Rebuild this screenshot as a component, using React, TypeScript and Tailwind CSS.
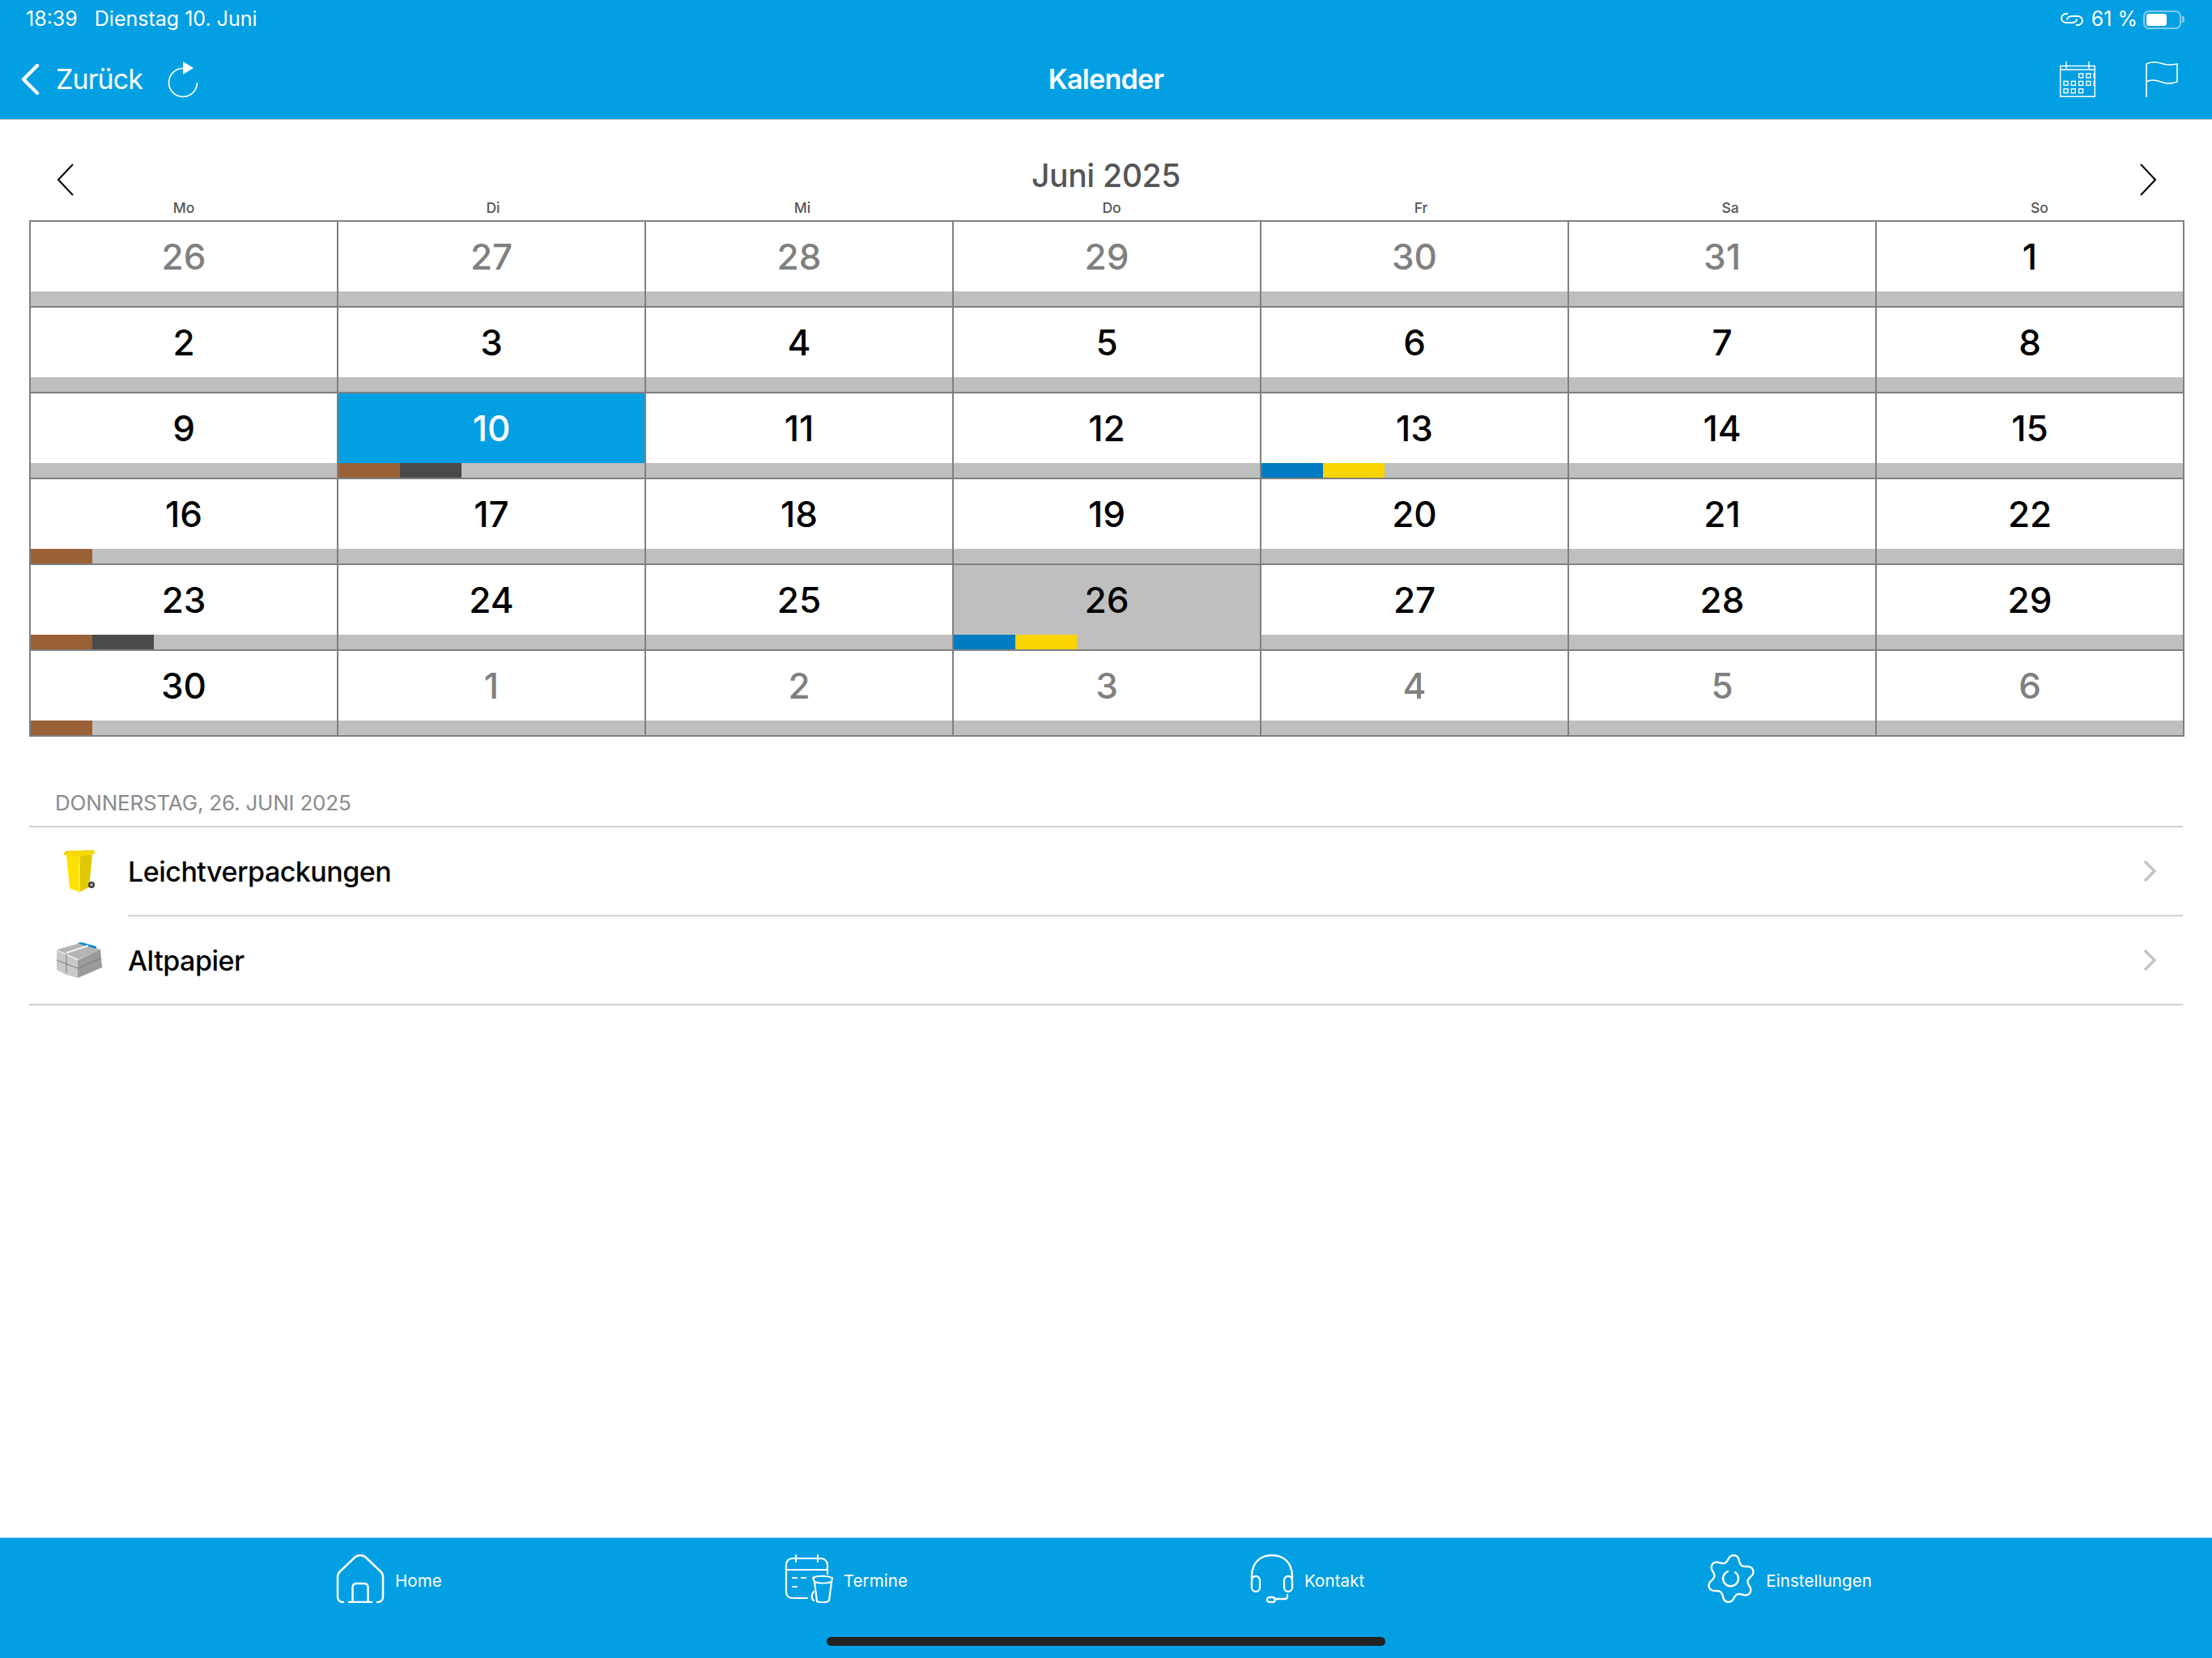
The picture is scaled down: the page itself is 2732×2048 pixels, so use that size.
import type { ReactNode } from "react";

const SANS = "font-['Inter','Noto_Sans',sans-serif]";

type Cell = { day: number; muted?: boolean; today?: boolean; selected?: boolean; marks?: string[] };

const BROWN = "bg-[#9b6136]";
const DARK = "bg-[#4a4a4a]";
const BLUE = "bg-[#007cc3]";
const YELLOW = "bg-[#fbd500]";

const weekdays = ["Mo", "Di", "Mi", "Do", "Fr", "Sa", "So"];

const cells: Cell[] = [
  { day: 26, muted: true },
  { day: 27, muted: true },
  { day: 28, muted: true },
  { day: 29, muted: true },
  { day: 30, muted: true },
  { day: 31, muted: true },
  { day: 1 },
  { day: 2 },
  { day: 3 },
  { day: 4 },
  { day: 5 },
  { day: 6 },
  { day: 7 },
  { day: 8 },
  { day: 9 },
  { day: 10, today: true, marks: [BROWN, DARK] },
  { day: 11 },
  { day: 12 },
  { day: 13, marks: [BLUE, YELLOW] },
  { day: 14 },
  { day: 15 },
  { day: 16, marks: [BROWN] },
  { day: 17 },
  { day: 18 },
  { day: 19 },
  { day: 20 },
  { day: 21 },
  { day: 22 },
  { day: 23, marks: [BROWN, DARK] },
  { day: 24 },
  { day: 25 },
  { day: 26, selected: true, marks: [BLUE, YELLOW] },
  { day: 27 },
  { day: 28 },
  { day: 29 },
  { day: 30, marks: [BROWN] },
  { day: 1, muted: true },
  { day: 2, muted: true },
  { day: 3, muted: true },
  { day: 4, muted: true },
  { day: 5, muted: true },
  { day: 6, muted: true },
];

function DayCell({ cell }: { cell: Cell }) {
  const bg = cell.today ? "bg-[#029fe3]" : cell.selected ? "bg-[#bfbfbf]" : "bg-white";
  const color = cell.today ? "text-white" : cell.muted ? "text-[#808080]" : "text-black";
  return (
    <div className="flex h-[106px] flex-col border-r-2 border-b-2 border-[#808080]">
      <div className={`flex h-[86px] items-center justify-center text-[44px] font-medium ${bg} ${color}`}>{cell.day}</div>
      <div className="flex h-[18px] bg-[#bfbfbf]">
        {cell.marks?.map((m) => (
          <div key={m} className={`h-full w-[76px] ${m}`} />
        ))}
      </div>
    </div>
  );
}

function NavItem({ icon, label }: { icon: ReactNode; label: string }) {
  return (
    <div className="flex items-start gap-[13px]">
      {icon}
      <span className="mt-[19px] text-[20.5px] leading-[28px] tracking-[0.1px] text-white">{label}</span>
    </div>
  );
}

function HomeIcon() {
  return (
    <svg width="60" height="60" viewBox="0 0 60 60" fill="none" stroke="white" strokeWidth="2.5" strokeLinecap="round" strokeLinejoin="round">
      <path d="M9 59 C4 59 2 56 2 52 V28 C2 25 3 23 5 21 L24 3 C27 0.5 33 0.5 36 3 L55 21 C57 23 58 25 58 28 V52 C58 56 56 59 51 59" />
      <path d="M16 59 H44 M20.5 59 V41 C20.5 38 22 36 25 36 H35 C38 36 39.5 38 39.5 41 V59" />
    </svg>
  );
}

function TermineIcon() {
  return (
    <svg width="60" height="60" viewBox="0 0 60 60" fill="none" stroke="white" strokeWidth="2.2" strokeLinecap="round" strokeLinejoin="round">
      <path d="M28 54 H10 C5 54 2 51 2 46 V14 C2 8 5 5 10 5 H44 C49 5 53 8 53 14 V24" />
      <path d="M2 19 H53 M14 1 V9 M41 1 V9" />
      <path d="M10 29 H15 M21 29 H26 M10 40 H15" />
      <path d="M35 29 C40 26 52 26 59 29 L58 34 L55 57 C52 60 44 60 40 58 L37 34 Z" />
      <path d="M37 34 C43 36 52 36 58 34" />
      <path d="M36 46 C33 49 33 55 36 57" />
    </svg>
  );
}

function KontaktIcon() {
  return (
    <svg width="54" height="60" viewBox="0 0 54 60" fill="none" stroke="white" strokeWidth="2.3" strokeLinecap="round" strokeLinejoin="round">
      <path d="M2 27 C2 10 13 1 27 1 C41 1 52 10 52 27 V38" />
      <path d="M2 27 V38" />
      <rect x="2" y="27" width="10" height="19" rx="5" />
      <rect x="42" y="27" width="10" height="19" rx="5" />
      <path d="M46 50 V52 C46 54 45 55 43 55 H30" />
      <rect x="21" y="53" width="10" height="6" rx="3" />
    </svg>
  );
}

// gear outline: six soft lobes, sampled around the centre
function gearPath() {
  const pts: string[] = [];
  for (let i = 0; i < 120; i++) {
    const a = (i / 120) * Math.PI * 2;
    const wave = Math.cos(6 * (a + Math.PI / 2 - 0.14));
    const r = 25 + 4.2 * (wave > 0 ? Math.pow(wave, 0.8) : -Math.pow(-wave, 0.8));
    pts.push(`${(30 + r * Math.cos(a)).toFixed(1)} ${(30 + r * Math.sin(a)).toFixed(1)}`);
  }
  return `M${pts.join(" L")} Z`;
}

function GearIcon() {
  return (
    <svg width="60" height="60" viewBox="0 0 60 60" fill="none" stroke="white" strokeWidth="2.4" strokeLinecap="round" strokeLinejoin="round">
      <path d={gearPath()} />
      <path d="M26 21 A9.5 9.5 0 1 0 35 22" />
    </svg>
  );
}

function BinIcon() {
  return (
    <svg width="40" height="54" viewBox="0 0 40 54">
      <path d="M4 6 L8 47 L20 52 L20 6 Z" fill="#ffe100" />
      <path d="M20 6 L36 6 L32 46 L20 52 Z" fill="#e0c800" />
      <path d="M0 6 L3 1 L38 0 L39 5 L20 8 Z" fill="#f6d800" />
      <path d="M20 8 V52" stroke="#fff27a" strokeWidth="1.2" />
      <circle cx="35" cy="43" r="4" fill="#333" />
      <circle cx="35" cy="43" r="2" fill="#aaa" />
    </svg>
  );
}

function PaperIcon() {
  return (
    <svg width="56" height="44" viewBox="0 0 56 44">
      <path d="M0 9 L27 21 L55 9 L29 1 Z" fill="#b4b4b4" />
      <path d="M25 1 L31 0 L49 5 L49 8 Z" fill="#0a8ad0" />
      <path d="M0 10 L26 22 L26 44 L12 40 L0 34 Z" fill="#c9c9c9" />
      <path d="M26 22 L54 9 L56 31 L26 44 Z" fill="#9a9a9a" />
      <path d="M0 22 L26 32 M26 32 L55 20 M12 14 V38" stroke="#7c7c7c" strokeWidth="1" fill="none" />
      <path d="M12 13 L39 4" stroke="#f2f2f2" strokeWidth="2" fill="none" />
    </svg>
  );
}

function CalendarGridIcon() {
  const rows = [
    [2, 3, 4],
    [0, 1, 2, 3, 4],
    [0, 1, 2],
  ];
  return (
    <svg width="44" height="44" viewBox="0 0 44 44" fill="none" stroke="white" strokeWidth="1.4">
      <path d="M0.7 5.5 H43.3 V43.3 H0.7 Z M0.7 10 H43.3 M8 0 V9 M36 0 V9" />
      {rows.map((row, y) =>
        row.map((x) => <rect key={`${x}-${y}`} x={5 + x * 9.3} y={15 + y * 9.4} width="5" height="5" />),
      )}
    </svg>
  );
}

function RowChevron() {
  return (
    <svg width="15" height="26" viewBox="0 0 15 26" fill="none" stroke="#c4c4c8" strokeWidth="3.6" strokeLinecap="round" strokeLinejoin="round">
      <path d="M2 2 L13 13 L2 24" />
    </svg>
  );
}

function ListRow({ icon, label, inset }: { icon: ReactNode; label: string; inset?: boolean }) {
  return (
    <div className={`flex h-[110px] ${inset ? "" : "border-b-2 border-[#d0d0d0]"}`}>
      <div className="flex w-[122px] shrink-0 items-center justify-center pl-[1px]">{icon}</div>
      <div className={`flex flex-1 items-center justify-between pr-[33px] ${inset ? "border-b-2 border-[#d0d0d0]" : ""}`}>
        <span className="pt-[1px] text-[34px] font-medium tracking-[-0.5px] text-black">{label}</span>
        <RowChevron />
      </div>
    </div>
  );
}

export default function App() {
  return (
    <div className={`flex h-[2048px] w-[2732px] flex-col bg-white ${SANS}`}>
      <header className="flex h-[148px] flex-col border-b border-[#c4c4c4] bg-[#029fe3] text-white">
        <div className="flex h-[48px] items-center justify-between pr-[34px] pl-[32px] text-[25px]">
          <div className="flex gap-[21px]">
            <span>18:39</span>
            <span>Dienstag 10. Juni</span>
          </div>
          <div className="flex items-center">
            <svg width="28" height="18" viewBox="0 0 28 18" fill="none" stroke="white" strokeWidth="2">
              <path d="M9 2 H7 C3.5 2 1 4.5 1 7.5 C1 10.5 3.5 13 7 13 H14 C17.5 13 20 11 20 8.5" />
              <path d="M19 16 H21 C24.5 16 27 13.5 27 10.5 C27 7.5 24.5 5 21 5 H14 C10.5 5 8 7 8 9.5" />
            </svg>
            <span className="ml-[10px]">61 %</span>
            <div className="ml-[7px] flex items-center">
              <div className="flex h-[23px] w-[47px] items-center rounded-[7px] border-2 border-white/50 p-[2px]">
                <div className="h-full w-[25px] rounded-[3px] bg-white" />
              </div>
              <div className="ml-[1px] h-[8px] w-[3px] rounded-r-[2px] bg-white/50" />
            </div>
          </div>
        </div>
        <div className="relative flex flex-1 items-center justify-between pr-[42px] pl-[25px]">
          <div className="flex items-center">
            <svg width="24" height="40" viewBox="0 0 24 40" fill="none" stroke="white" strokeWidth="4.4" strokeLinecap="round" strokeLinejoin="round">
              <path d="M21 3 L4 20 L21 37" />
            </svg>
            <span className="ml-[20px] text-[34px] tracking-[-0.9px]">Zurück</span>
            <svg className="ml-[31px]" width="38" height="46" viewBox="0 0 38 46" fill="none">
              <path d="M19 9.5 A17.5 17.5 0 1 0 36.5 27" stroke="white" strokeWidth="1.6" />
              <path d="M19 1 L32 9 L19 17 Z" fill="white" />
            </svg>
          </div>
          <span className="absolute left-1/2 -translate-x-1/2 text-[34px] font-semibold tracking-[-0.7px]">Kalender</span>
          <div className="flex items-center gap-[62px]">
            <CalendarGridIcon />
            <svg width="40" height="44" viewBox="0 0 40 44" fill="none" stroke="white" strokeWidth="1.6">
              <path d="M1 44 V3 C8 -1 16 1 22 3 C28 5 34 4 39 3 V25 C34 27 28 28 22 26 C16 24 8 21 1 25" />
            </svg>
          </div>
        </div>
      </header>

      <section className="relative flex h-[124px] items-start justify-center pt-[44px]">
        <svg className="absolute top-[54px] left-[71px]" width="20" height="40" viewBox="0 0 20 40" fill="none" stroke="black" strokeWidth="2">
          <path d="M19 1 L1 20 L19 39" />
        </svg>
        <svg className="absolute top-[54px] right-[69px]" width="20" height="40" viewBox="0 0 20 40" fill="none" stroke="black" strokeWidth="2">
          <path d="M1 1 L19 20 L1 39" />
        </svg>
        <h1 className="text-[39px] leading-[50px] font-medium tracking-[-0.3px] text-[#555555]">Juni 2025</h1>
        <div className="absolute bottom-[3px] left-[36px] grid w-[2674px] grid-cols-7 text-center text-[17.5px] leading-[24px] font-medium text-[#555555]">
          {weekdays.map((d) => (
            <span key={d}>{d}</span>
          ))}
        </div>
      </section>

      <div className="mr-[34px] ml-[36px] grid grid-cols-7 border-t-2 border-l-2 border-[#808080]">
        {cells.map((c, i) => (
          <DayCell key={i} cell={c} />
        ))}
      </div>

      <div className="mt-[57px] mr-[36px] ml-[36px]">
        <div className="h-[55px] border-b-2 border-[#d0d0d0] pt-[9px] pl-[32px] text-[26px] leading-[32px] tracking-[-0.2px] text-[#8a8a8e]">
          DONNERSTAG, 26. JUNI 2025
        </div>
        <ListRow icon={<BinIcon />} label="Leichtverpackungen" inset />
        <ListRow icon={<PaperIcon />} label="Altpapier" />
      </div>

      <div className="flex-1" />

      <footer className="relative flex h-[149px] items-start justify-between border-t border-[#8cc6e8] bg-[#029fe3] pt-[20px] pr-[420px] pl-[415px]">
        <NavItem icon={<HomeIcon />} label="Home" />
        <NavItem icon={<TermineIcon />} label="Termine" />
        <NavItem icon={<KontaktIcon />} label="Kontakt" />
        <NavItem icon={<GearIcon />} label="Einstellungen" />
        <div className="absolute bottom-[15px] left-1/2 h-[11px] w-[690px] -translate-x-1/2 rounded-full bg-[#222222]" />
      </footer>
    </div>
  );
}
